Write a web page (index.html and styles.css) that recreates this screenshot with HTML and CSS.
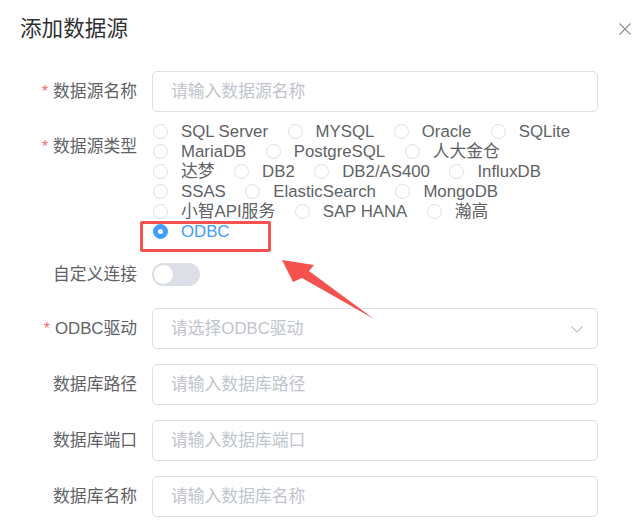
FILE: index.html
```html
<!DOCTYPE html>
<html lang="zh-CN">
<head>
<meta charset="utf-8">
<title>添加数据源</title>
<link rel="stylesheet" href="styles.css">
</head>
<body>
<div class="dialog">
  <div class="header">
    <span class="title">添加数据源</span>
    <svg class="close" width="12" height="12" viewBox="0 0 12 12"><path d="M0.5 0.5 L11.5 11.5 M11.5 0.5 L0.5 11.5" stroke="#909399" stroke-width="1.2" fill="none"/></svg>
  </div>
  <div class="form">
    <div class="item item-first">
      <div class="label"><span class="star">*</span>数据源名称</div>
      <div class="control"><input class="input" placeholder="请输入数据源名称"></div>
    </div>
    <div class="item item-radios">
      <div class="label label-radios"><span class="star">*</span>数据源类型</div>
      <div class="control radio-group">
        <label class="radio"><span class="dot"></span><span class="rtext">SQL Server</span></label>
        <label class="radio"><span class="dot"></span><span class="rtext">MYSQL</span></label>
        <label class="radio"><span class="dot"></span><span class="rtext">Oracle</span></label>
        <label class="radio"><span class="dot"></span><span class="rtext">SQLite</span></label>
        <label class="radio"><span class="dot"></span><span class="rtext">MariaDB</span></label>
        <label class="radio"><span class="dot"></span><span class="rtext">PostgreSQL</span></label>
        <label class="radio"><span class="dot"></span><span class="rtext">人大金仓</span></label>
        <label class="radio"><span class="dot"></span><span class="rtext">达梦</span></label>
        <label class="radio"><span class="dot"></span><span class="rtext">DB2</span></label>
        <label class="radio"><span class="dot"></span><span class="rtext">DB2/AS400</span></label>
        <label class="radio"><span class="dot"></span><span class="rtext">InfluxDB</span></label>
        <label class="radio"><span class="dot"></span><span class="rtext">SSAS</span></label>
        <label class="radio"><span class="dot"></span><span class="rtext">ElasticSearch</span></label>
        <label class="radio"><span class="dot"></span><span class="rtext">MongoDB</span></label>
        <label class="radio"><span class="dot"></span><span class="rtext">小智API服务</span></label>
        <label class="radio"><span class="dot"></span><span class="rtext">SAP HANA</span></label>
        <label class="radio"><span class="dot"></span><span class="rtext">瀚高</span></label>
        <span class="break"></span>
        <label class="radio checked"><span class="dot"></span><span class="rtext">ODBC</span></label>
      </div>
    </div>
    <div class="item">
      <div class="label">自定义连接</div>
      <div class="control switch-wrap"><span class="switch"><span class="knob"></span></span></div>
    </div>
    <div class="item">
      <div class="label"><span class="star">*</span>ODBC驱动</div>
      <div class="control select">
        <input class="input" placeholder="请选择ODBC驱动" readonly>
        <svg class="chevron" width="12" height="7" viewBox="0 0 12 7"><path d="M0.5 0.5 L6 6 L11.5 0.5" stroke="#c0c4cc" stroke-width="1.1" fill="none"/></svg>
      </div>
    </div>
    <div class="item">
      <div class="label">数据库路径</div>
      <div class="control"><input class="input" placeholder="请输入数据库路径"></div>
    </div>
    <div class="item">
      <div class="label">数据库端口</div>
      <div class="control"><input class="input" placeholder="请输入数据库端口"></div>
    </div>
    <div class="item">
      <div class="label">数据库名称</div>
      <div class="control"><input class="input" placeholder="请输入数据库名称"></div>
    </div>
  </div>
  <div class="annot-box"></div>
  <svg class="annot-arrow" width="641" height="525" viewBox="0 0 641 525">
    <polygon points="282,260 314,265 309,271 374,319 302,278 293,282" fill="#f5524f"/>
  </svg>
</div>
</body>
</html>
```
FILE: styles.css
```css
* { box-sizing: border-box; }
html, body { margin: 0; padding: 0; background: #fff; }
body {
  font-family: "Liberation Sans", "Noto Sans CJK SC", sans-serif;
  color: #606266;
  width: 641px;
  height: 525px;
  overflow: hidden;
}
.dialog { position: relative; width: 641px; height: 525px; }
.header {
  height: 57px;
  display: flex;
  align-items: center;
  justify-content: space-between;
  padding: 0 10px 0 20px;
}
.title {
  font-size: 21.6px;
  color: #303133;
  line-height: 30px;
}
.close { display: block; margin-top: 0; }
.form { padding-top: 14px; }
.item {
  display: grid;
  grid-template-columns: 152px 446px;
  margin-bottom: 15px;
}
.item-first { margin-bottom: 9px; }
.item-radios { margin-bottom: 13px; }
.item-radios + .item { margin-bottom: 13px; }
.label {
  font-size: 16.8px;
  line-height: 41px;
  text-align: right;
  padding-right: 15px;
  color: #606266;
  white-space: nowrap;
}
.label-radios { line-height: 41px; padding-top: 5px; }
.star { color: #f56c6c; margin-right: 5px; font-size: 16px; }
.control { position: relative; min-height: 41px; }
.input {
  display: block;
  width: 100%;
  height: 41px;
  border: 1px solid #dcdfe6;
  border-radius: 5px;
  padding: 0 18px;
  font-family: inherit;
  font-size: 16.8px;
  color: #606266;
  background: #fff;
  outline: none;
}
.input::placeholder { color: #c0c4cc; }
.chevron { position: absolute; right: 15px; top: 18px; }
.radio-group {
  display: flex;
  flex-wrap: wrap;
  align-content: flex-start;
  padding-left: 1px;
  min-height: 0;
}
.radio {
  display: flex;
  align-items: center;
  height: 20px;
  margin-right: 19.5px;
  font-size: 16.8px;
  color: #606266;
  white-space: nowrap;
}
.dot {
  width: 15px;
  height: 15px;
  border: 1px solid #dcdfe6;
  border-radius: 50%;
  background: #fff;
  margin-right: 13px;
  position: relative;
  flex: none;
}
.rtext { line-height: 20px; padding-top: 2px; }
.checked .dot { background: #409eff; border-color: #409eff; }
.checked .dot::after {
  content: "";
  position: absolute;
  left: 50%;
  top: 50%;
  width: 5px;
  height: 5px;
  margin: -2.5px 0 0 -2.5px;
  border-radius: 50%;
  background: #fff;
}
.checked .rtext { color: #409eff; }
.break { flex-basis: 100%; height: 0; }
.switch-wrap { display: flex; align-items: center; }
.switch {
  display: block;
  width: 48px;
  height: 23px;
  border-radius: 12px;
  background: #dcdfe6;
  position: relative;
}
.knob {
  position: absolute;
  left: 2px;
  top: 2px;
  width: 19px;
  height: 19px;
  border-radius: 50%;
  background: #fff;
}
.annot-box {
  position: absolute;
  left: 140px;
  top: 221px;
  width: 131px;
  height: 31px;
  border: 3px solid #f5524f;
  border-radius: 2px;
}
.annot-arrow { position: absolute; left: 0; top: 0; pointer-events: none; }
```
